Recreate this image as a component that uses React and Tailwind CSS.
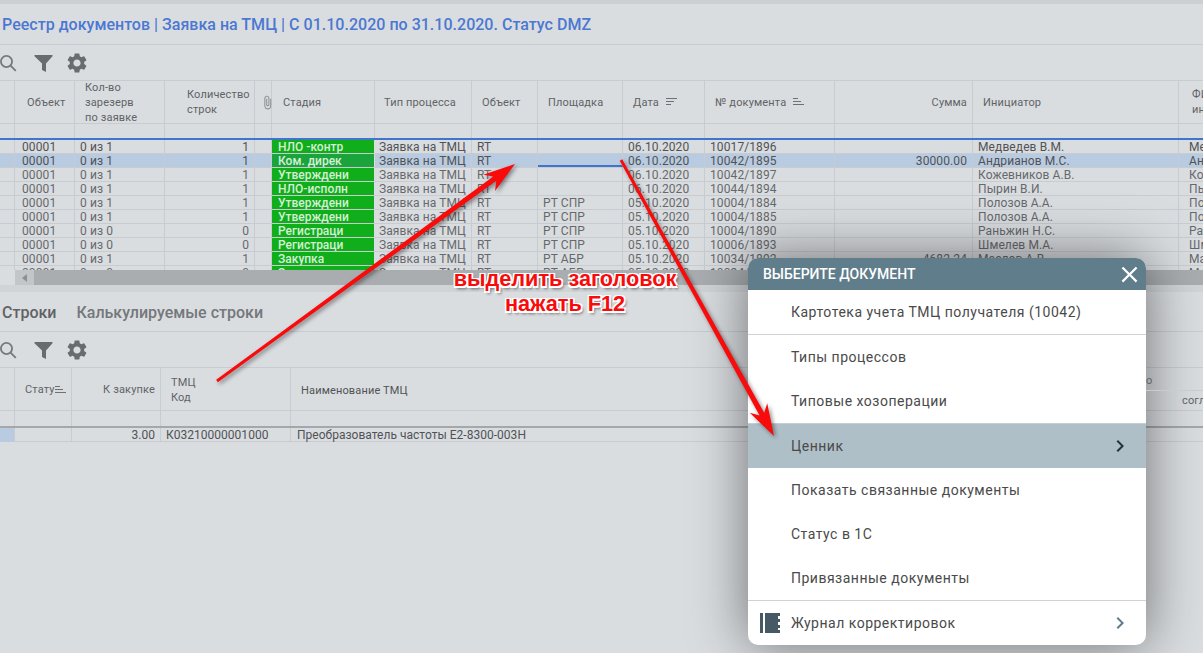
import { MdSettings, MdAttachFile, MdClose, MdChevronRight } from "react-icons/md"

const topRows = [
  { stage: "НЛО -контр", rt: "RT", site: "", date: "06.10.2020", doc: "10017/1896", sum: "", name: "Медведев В.М.", qty: "0 из 1", n: "1", dark: true },
  { stage: "Ком. дирек", rt: "RT", site: "", date: "06.10.2020", doc: "10042/1895", sum: "30000.00", name: "Андрианов М.С.", qty: "0 из 1", n: "1", selected: true, dark: true },
  { stage: "Утверждени", rt: "RT", site: "", date: "06.10.2020", doc: "10042/1897", sum: "", name: "Кожевников А.В.", qty: "0 из 1", n: "1" },
  { stage: "НЛО-исполн", rt: "RT", site: "", date: "06.10.2020", doc: "10044/1894", sum: "", name: "Пырин В.И.", qty: "0 из 1", n: "1" },
  { stage: "Утверждени", rt: "RT", site: "РТ СПР", date: "05.10.2020", doc: "10004/1884", sum: "", name: "Полозов А.А.", qty: "0 из 1", n: "1" },
  { stage: "Утверждени", rt: "RT", site: "РТ СПР", date: "05.10.2020", doc: "10004/1885", sum: "", name: "Полозов А.А.", qty: "0 из 1", n: "1" },
  { stage: "Регистраци", rt: "RT", site: "РТ СПР", date: "05.10.2020", doc: "10004/1890", sum: "", name: "Раньжин Н.С.", qty: "0 из 0", n: "0" },
  { stage: "Регистраци", rt: "RT", site: "РТ СПР", date: "05.10.2020", doc: "10006/1893", sum: "", name: "Шмелев М.А.", qty: "0 из 0", n: "0" },
  { stage: "Закупка", rt: "RT", site: "РТ АБР", date: "05.10.2020", doc: "10034/1892", sum: "4682.24", name: "Маслов А.В.", qty: "0 из 1", n: "1" },
  { stage: "Закупка", rt: "RT", site: "РТ АБР", date: "05.10.2020", doc: "10034/1891", sum: "", name: "Маслов А.В.", qty: "0 из 0", n: "0" },
]

const menuItems = [
  { label: "Типы процессов" },
  { label: "Типовые хозоперации" },
  { label: "Ценник", active: true },
  { label: "Показать связанные документы" },
  { label: "Статус в 1С" },
  { label: "Привязанные документы" },
]

const TOP_COLS = "grid grid-cols-[15px_60px_90px_90px_17px_103px_97px_66px_85px_82px_130px_138px_206px_121px]"
const BOTTOM_COLS = "grid grid-cols-[15px_57px_89px_130px_1012px]"

const Cell = ({ className = "", children }) => (
  <div className={`border-r border-[#c8ccd0] overflow-hidden whitespace-nowrap ${className}`}>{children}</div>
)

const HeadCell = ({ className = "", children }) => (
  <div className={`border-r border-[#c8ccd0] flex items-center text-[11px] leading-[15px] tracking-[0.15px] text-[#5f6366] ${className}`}>
    {children}
  </div>
)

const SortIcon = ({ flip }) => (
  <svg width="12" height="8" viewBox="0 0 12 8" className="shrink-0" stroke="#6d7174" strokeWidth="1">
    {flip ? (
      <>
        <path d="M0 .5h5M0 3.5h8M0 6.5h11" />
      </>
    ) : (
      <>
        <path d="M0 .5h11M0 3.5h8M0 6.5h5" />
      </>
    )}
  </svg>
)

const Toolbar = ({ className }) => (
  <div className={`flex items-center ${className}`}>
    <svg width="18" height="18" viewBox="0 0 18 18" fill="none" stroke="#75797c" strokeWidth="1.8" className="-ml-px">
      <circle cx="7.5" cy="7.5" r="5.6" />
      <path d="M11.6 11.6l5.2 5.2" />
    </svg>
    <svg width="19" height="18" viewBox="0 0 19 18" fill="#686c6f" className="ml-[17px]">
      <path d="M.5 1h18v1.2L12 9.4V18l-4-2V9.4L.5 2.2z" />
    </svg>
    <MdSettings size={24} color="#686c6f" className="ml-[12px]" />
  </div>
)

const TopRow = ({ row }) => {
  const text = row.dark ? "text-[#505356]" : "text-[#66696c]"
  const bg = row.selected ? "bg-[#b9cbe0]" : ""
  return (
    <div className={`${TOP_COLS} h-[14px] border-b border-[#c8ccd0] text-[12px] leading-[14px] tracking-[0.1px] ${text} ${bg}`}>
      <Cell />
      <Cell className="pl-[7px]">00001</Cell>
      <Cell className="pl-[5px]">{row.qty}</Cell>
      <Cell className="pr-[5px] text-right">{row.n}</Cell>
      <Cell />
      <div className={`pl-[6px] font-medium tracking-normal overflow-hidden whitespace-nowrap text-[#d5f0d5] border-r border-[#dadde0] ${row.selected ? "bg-[#1ba33c]" : "bg-[#0fae1a]"}`}>
        {row.stage}
      </div>
      <Cell className="pl-[4px]">Заявка на ТМЦ</Cell>
      <Cell className="pl-[5px]">{row.rt}</Cell>
      <Cell className={`pl-[5px] ${row.selected ? "border-b-2 border-b-[#3f74cf]" : ""}`}>{row.site}</Cell>
      <Cell className="pl-[5px]">{row.date}</Cell>
      <Cell className="pl-[5px]">{row.doc}</Cell>
      <Cell className="pr-[5px] text-right">{row.sum}</Cell>
      <Cell className="pl-[5px]">{row.name}</Cell>
      <div className="pl-[10px] overflow-hidden whitespace-nowrap">{row.name}</div>
    </div>
  )
}

const Arrow = ({ x1, y1, x2, y2 }) => {
  const len = Math.hypot(x2 - x1, y2 - y1)
  const ux = (x2 - x1) / len
  const uy = (y2 - y1) / len
  const px = -uy
  const py = ux
  const at = (back, side) => `${x2 - ux * back + px * side},${y2 - uy * back + py * side}`
  const points = [
    `${x1 + px * 1.4},${y1 + py * 1.4}`,
    at(25, 2.6),
    at(32, 10),
    `${x2},${y2}`,
    at(32, -10),
    at(25, -2.6),
    `${x1 - px * 1.4},${y1 - py * 1.4}`,
  ].join(" ")
  return <polygon points={points} fill="#f90b0b" />
}

const DocMenu = () => (
  <div className="absolute left-[748px] top-[258px] w-[398px] h-[387px] rounded-[10px] bg-white overflow-hidden shadow-[0_0_55px_rgba(0,0,0,0.5)] font-['Roboto',sans-serif]">
    <div className="h-[32px] bg-[#607d8b] flex items-center justify-between pl-[15px] pr-[3px] text-white text-[14px] font-medium">
      <span>ВЫБЕРИТЕ ДОКУМЕНТ</span>
      <MdClose size={27} />
    </div>
    <div className="h-[45px] flex items-center pl-[43px] border-b border-[#d0d3d6] text-[14px] tracking-[0.5px] text-[#4a4a4a]">
      Картотека учета ТМЦ получателя (10042)
    </div>
    {menuItems.map((item) => (
      <div
        key={item.label}
        className={`flex items-center justify-between pl-[43px] pr-[14px] text-[14px] tracking-[0.5px] text-[#4a4a4a] ${item.active ? "h-[45px] bg-[#afbfc7] border-t border-[#c5ced3]" : "h-[44px]"}`}
      >
        <span>{item.label}</span>
        {item.active && <MdChevronRight size={24} color="#263238" />}
      </div>
    ))}
    <div className="h-[45px] flex items-center justify-between border-t border-[#d0d3d6] pl-[12px] pr-[14px] text-[14px] tracking-[0.5px] text-[#4a4a4a]">
      <div className="flex items-center">
        <svg width="20" height="20" viewBox="0 0 20 20" fill="#455a64">
          <path d="M0 0h3v20H0zM5 0h15v3h-2v3h2v3h-2v3h2v3h-2v2h2v3H5z" />
        </svg>
        <span className="ml-[11px]">Журнал корректировок</span>
      </div>
      <MdChevronRight size={24} color="#607d8b" />
    </div>
  </div>
)

export default function App() {
  return (
    <div className="relative w-[1203px] h-[653px] overflow-hidden bg-[#dadde0] font-['Roboto',sans-serif]">
      <div className="h-[4px] bg-[#cdd0d3]" />

      {/* Реестр */}
      <div className="h-[41px] pl-[2px] pt-px flex items-center border-b border-[#c8ccd0] text-[16px] font-medium tracking-[0.02px] text-[#4a78d2]">
        Реестр документов | Заявка на ТМЦ | С 01.10.2020 по 31.10.2020. Статус DMZ
      </div>
      <Toolbar className="h-[36px] border-b border-[#c8ccd0]" />

      <div className={`${TOP_COLS} grid-rows-[42px] h-[43px] border-b border-[#c8ccd0]`}>
        <HeadCell />
        <HeadCell className="pl-[12px]">Объект</HeadCell>
        <HeadCell className="pl-[10px]">Кол-во<br />зарезерв<br />по заявке</HeadCell>
        <HeadCell className="pl-[22px]">Количество<br />строк</HeadCell>
        <HeadCell className="justify-end">
          <MdAttachFile size={15} color="#85898c" className="-mr-[4px]" />
        </HeadCell>
        <HeadCell className="pl-[11px]">Стадия</HeadCell>
        <HeadCell className="pl-[9px]">Тип процесса</HeadCell>
        <HeadCell className="pl-[10px]">Объект</HeadCell>
        <HeadCell className="pl-[10px]">Площадка</HeadCell>
        <HeadCell className="pl-[10px] gap-[7px]">Дата <SortIcon /></HeadCell>
        <HeadCell className="pl-[10px] gap-[7px]">№ документа <SortIcon flip /></HeadCell>
        <HeadCell className="justify-end pr-[5px]">Сумма</HeadCell>
        <HeadCell className="pl-[10px]">Инициатор</HeadCell>
        <div className="pl-[13px] flex items-center text-[11px] leading-[15px] tracking-[0.15px] text-[#5f6366]">
          ФИО<br />инициатора
        </div>
      </div>
      <div className={`${TOP_COLS} h-[14px]`}>
        {Array.from({ length: 14 }, (_, i) => (
          <Cell key={i} />
        ))}
      </div>
      <div className="h-[2px] bg-[#3f74cf]" />

      <div className="h-[130px] overflow-hidden">
        {topRows.map((row, i) => (
          <TopRow key={i} row={row} />
        ))}
      </div>

      {/* horizontal scroll */}
      <div className="h-[15px] bg-[#c3c6c9] flex items-center">
        <div className="w-[15px] h-full bg-[#dadde0]" />
        <div className="w-[19px] flex justify-center">
          <div className="border-y-[4px] border-y-transparent border-r-[5px] border-r-[#8d9093]" />
        </div>
        <div className="flex-1 h-full bg-[#a9adaf]" />
      </div>
      <div className="h-[7px] bg-[#d1d4d7]" />

      {/* Строки */}
      <div className="h-[40px] pl-[2px] pt-[2px] flex items-center gap-[20px] border-b border-[#c8ccd0] text-[16px] font-medium text-[#74787b]">
        <span className="text-[#5f6366]">Строки</span>
        <span>Калькулируемые строки</span>
      </div>
      <Toolbar className="h-[36px] border-b border-[#c8ccd0]" />

      <div className={`${BOTTOM_COLS} h-[43px] border-b border-[#c8ccd0]`}>
        <HeadCell />
        <HeadCell className="pl-[10px] pt-px">Стату<SortIcon flip /></HeadCell>
        <HeadCell className="justify-end pr-[5px] pt-px">К закупке</HeadCell>
        <HeadCell className="pl-[10px] pt-px">ТМЦ<br />Код</HeadCell>
        <div className="pl-[10px] pt-[4px] flex items-center text-[11px] tracking-[0.15px] text-[#4f5356]">Наименование ТМЦ</div>
      </div>
      <div className={`${BOTTOM_COLS} h-[15px]`}>
        <Cell />
        <Cell />
        <Cell />
        <Cell />
        <div />
      </div>
      <div className="h-[2px] bg-[#a5a8ab]" />
      <div className={`${BOTTOM_COLS} h-[14px] border-b border-[#c8ccd0] text-[12px] leading-[14px] tracking-[0.02px] text-[#505356]`}>
        <Cell className="bg-[#b9cbe0]" />
        <Cell />
        <Cell className="text-right pr-[5px]">3.00</Cell>
        <Cell className="pl-[5px]">К03210000001000</Cell>
        <div className="pl-[6px] whitespace-nowrap">Преобразователь частоты Е2-8300-003Н</div>
      </div>

      <DocMenu />

      {/* подсказка */}
      <div className="absolute left-[420px] top-[266px] w-[290px] text-center font-['Liberation_Sans',sans-serif] text-[21.7px] leading-[25px] font-bold text-[#f90b0b] [text-shadow:1.5px_1.5px_0_#fff,-1.5px_-1.5px_0_#fff,1.5px_-1.5px_0_#fff,-1.5px_1.5px_0_#fff,2px_3px_3px_rgba(0,0,0,0.55)]">
        выделить заголовок
        <br />
        нажать F12
      </div>
      <svg width="1203" height="653" className="absolute inset-0 pointer-events-none drop-shadow-[2px_2px_2px_rgba(0,0,0,0.45)]">
        <Arrow x1={217} y1={381} x2={515} y2={164} />
        <Arrow x1={621} y1={160} x2={774} y2={436} />
      </svg>
      <span className="absolute left-[1146px] top-[373px] text-[11px] text-[#5f6366]">о</span>
      <span className="absolute left-[1182px] top-[393px] text-[11px] tracking-[0.15px] text-[#5f6366]">согл</span>
      <div className="absolute left-[1146px] top-[390px] w-[57px] h-px bg-[#c8ccd0]" />
    </div>
  )
}
